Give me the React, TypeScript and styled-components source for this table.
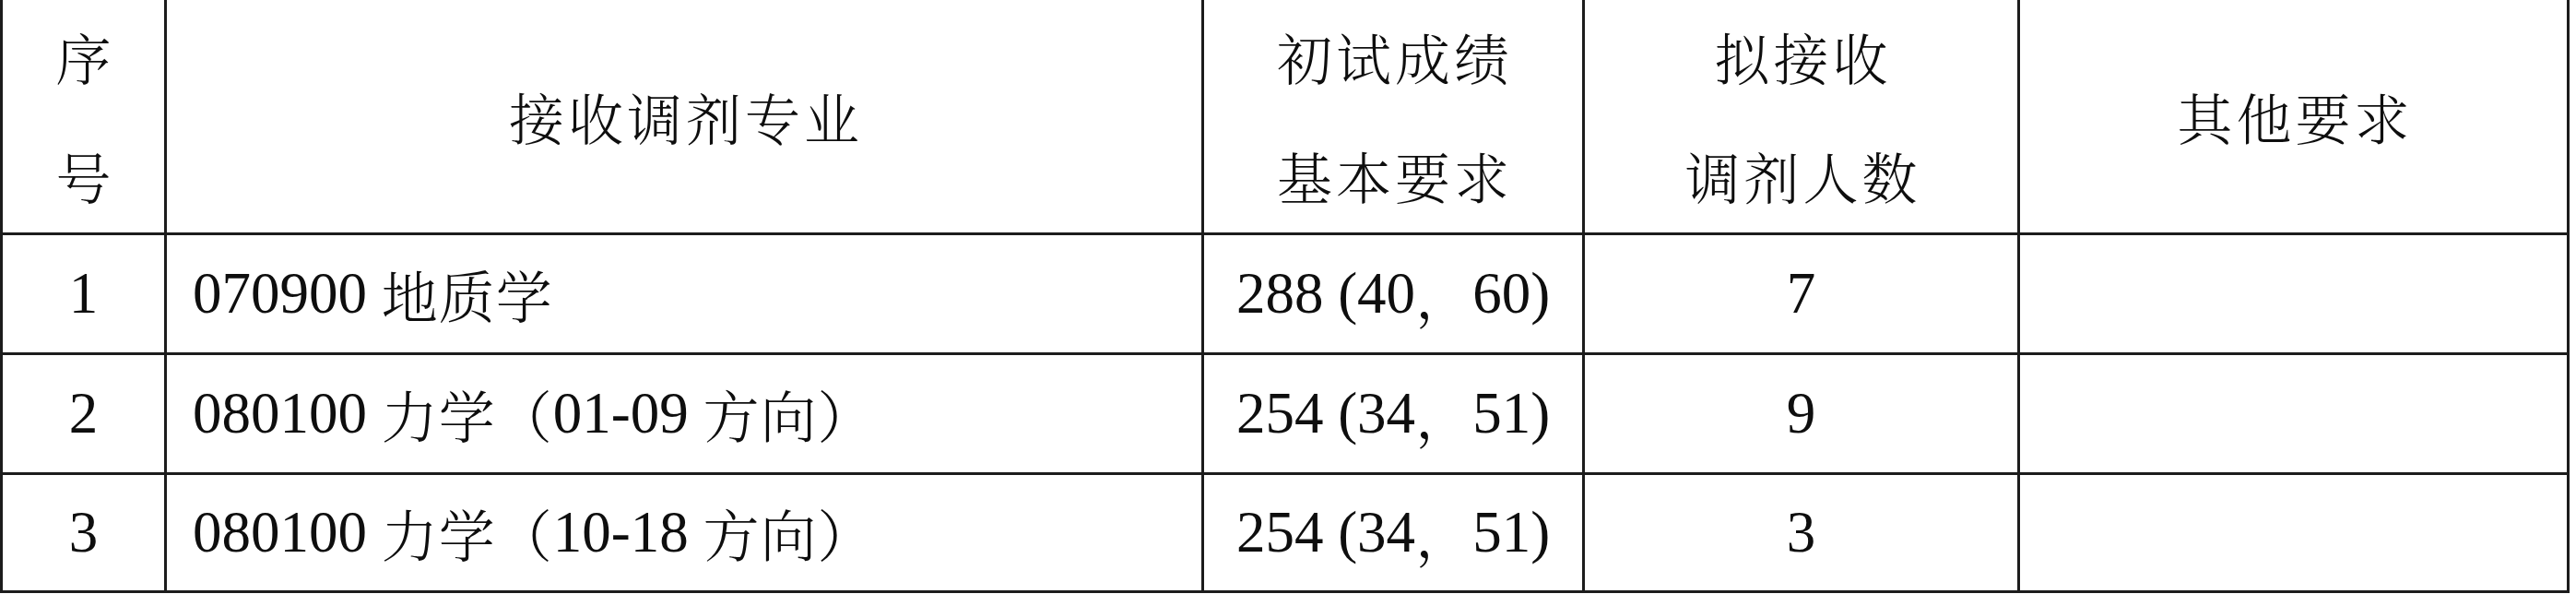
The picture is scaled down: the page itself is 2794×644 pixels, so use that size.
import styled, { createGlobalStyle } from "styled-components";

const GlobalStyle = createGlobalStyle`
    html, body {
        margin: 0;
        padding: 0;
        background: #ffffff;
    }
`

const LINE = "3px solid #1c1c1c";
const CJK_FACE = `"Noto Serif CJK SC", "Noto Sans CJK SC", sans-serif`;

const Sheet = styled.div`
    display: grid;
    grid-template-columns: 178px 1125px 413px 472px 596px;
    grid-template-rows: 255px 130px 130px 128px;
    width: max-content;
    border-left: ${LINE};
    font-family: "Liberation Serif", "Noto Sans CJK SC", serif;
    color: #0e0e0e;
`

const Cell = styled.div<{ $align?: "left" | "center" }>`
    box-sizing: border-box;
    display: flex;
    align-items: center;
    justify-content: ${(p) => (p.$align === "left" ? "flex-start" : "center")};
    padding: 0 0 0 ${(p) => (p.$align === "left" ? "28px" : "0")};
    border-right: ${LINE};
    border-bottom: ${LINE};
    font-size: 63px;
    line-height: 1;
    white-space: pre;
`

const HeadCell = styled(Cell)`
    flex-direction: column;
    font-family: ${CJK_FACE};
    font-weight: 300;
    font-size: 60px;
    letter-spacing: 4px;
    line-height: 129px;
    padding-left: 4px;
`

const HeadLine = styled.span`
    display: block;
`

const Cjk = styled.span`
    font-family: ${CJK_FACE};
    font-weight: 300;
    font-size: 61px;
    letter-spacing: 1px;
`

type Row = {
    no: string;
    code: string;
    name: string;
    score: string;
    count: string;
};

const rows: Row[] = [
    { no: "1", code: "070900", name: "地质学", score: "288 (40，60)", count: "7" },
    { no: "2", code: "080100", name: "力学（01-09 方向）", score: "254 (34，51)", count: "9" },
    { no: "3", code: "080100", name: "力学（10-18 方向）", score: "254 (34，51)", count: "3" },
];

const CJK_RUN = /([\u3000-\u9fff\uff00-\uffef]+)/;

// split a mixed label so the CJK runs use the CJK face
function Mixed({ text }: { text: string }) {
    const parts = text.split(CJK_RUN);
    return (
        <>
            {parts.map((part, i) =>
                i % 2 === 1 ? <Cjk key={i}>{part}</Cjk> : <span key={i}>{part}</span>
            )}
        </>
    );
}

export default function App() {
    return (
        <>
            <GlobalStyle />
            <Sheet>
                <HeadCell>
                    <HeadLine>序</HeadLine>
                    <HeadLine>号</HeadLine>
                </HeadCell>
                <HeadCell>接收调剂专业</HeadCell>
                <HeadCell>
                    <HeadLine>初试成绩</HeadLine>
                    <HeadLine>基本要求</HeadLine>
                </HeadCell>
                <HeadCell>
                    <HeadLine>拟接收</HeadLine>
                    <HeadLine>调剂人数</HeadLine>
                </HeadCell>
                <HeadCell>其他要求</HeadCell>

                {rows.map((r) => (
                    <>
                        <Cell key={r.no + "a"}>{r.no}</Cell>
                        <Cell key={r.no + "b"} $align="left">
                            <Mixed text={`${r.code} ${r.name}`} />
                        </Cell>
                        <Cell key={r.no + "c"}>
                            <Mixed text={r.score} />
                        </Cell>
                        <Cell key={r.no + "d"}>{r.count}</Cell>
                        <Cell key={r.no + "e"}></Cell>
                    </>
                ))}
            </Sheet>
        </>
    )
}
